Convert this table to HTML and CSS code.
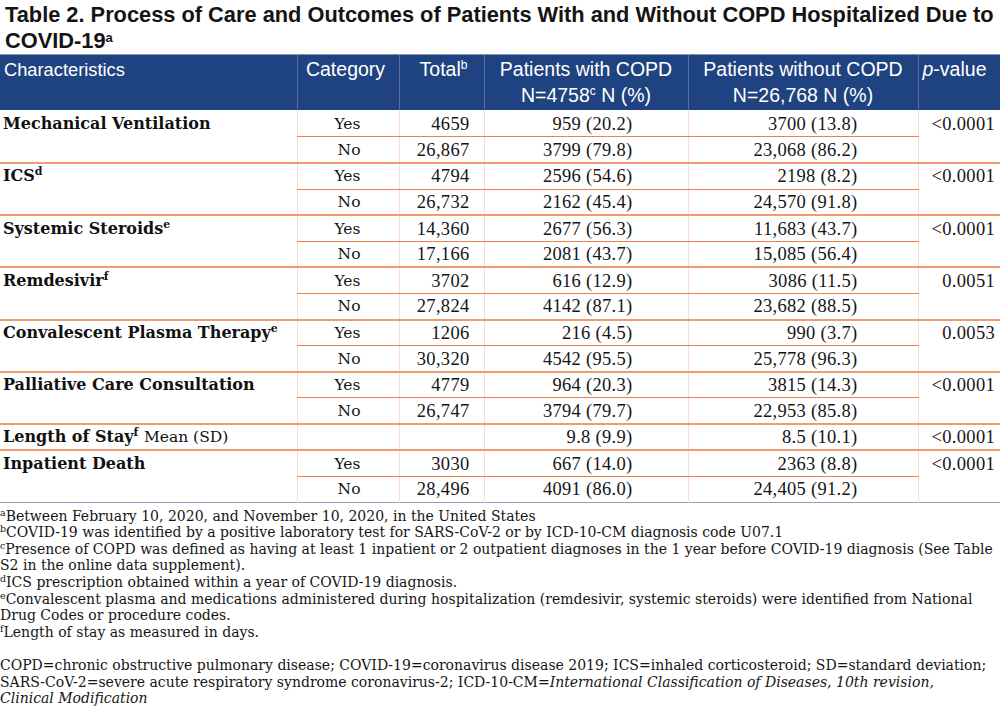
FILE: index.html
```html
<!DOCTYPE html>
<html lang="en">
<head>
<meta charset="utf-8">
<title>Table 2</title>
<link rel="stylesheet" href="styles.css">
</head>
<body>
<h1 class="title">Table 2. Process of Care and Outcomes of Patients With and Without COPD Hospitalized Due to COVID-19<sup>a</sup></h1>
<table class="tbl">
  <colgroup>
    <col class="c1"><col class="c2"><col class="c3"><col class="c4"><col class="c5"><col class="c6">
  </colgroup>
  <thead>
    <tr>
      <th class="h-left">Characteristics</th>
      <th class="h-cat">Category</th>
      <th class="h-tot">Total<sup>b</sup></th>
      <th class="h-mid">Patients with COPD<br>N=4758<sup>c</sup> N (%)</th>
      <th class="h-mid">Patients without COPD<br>N=26,768 N (%)</th>
      <th class="h-p"><i>p</i>-value</th>
    </tr>
  </thead>
  <tbody class="grp first">
    <tr class="top"><td class="lab" rowspan="2">Mechanical Ventilation</td><td class="cat">Yes</td><td class="tot">4659</td><td class="w">959 (20.2)</td><td class="wo">3700 (13.8)</td><td class="pv" rowspan="2">&lt;0.0001</td></tr>
    <tr class="bot"><td class="cat">No</td><td class="tot">26,867</td><td class="w">3799 (79.8)</td><td class="wo">23,068 (86.2)</td></tr>
  </tbody>
  <tbody class="grp">
    <tr class="top"><td class="lab" rowspan="2">ICS<sup>d</sup></td><td class="cat">Yes</td><td class="tot">4794</td><td class="w">2596 (54.6)</td><td class="wo">2198 (8.2)</td><td class="pv" rowspan="2">&lt;0.0001</td></tr>
    <tr class="bot"><td class="cat">No</td><td class="tot">26,732</td><td class="w">2162 (45.4)</td><td class="wo">24,570 (91.8)</td></tr>
  </tbody>
  <tbody class="grp">
    <tr class="top"><td class="lab" rowspan="2">Systemic Steroids<sup>e</sup></td><td class="cat">Yes</td><td class="tot">14,360</td><td class="w">2677 (56.3)</td><td class="wo">11,683 (43.7)</td><td class="pv" rowspan="2">&lt;0.0001</td></tr>
    <tr class="bot"><td class="cat">No</td><td class="tot">17,166</td><td class="w">2081 (43.7)</td><td class="wo">15,085 (56.4)</td></tr>
  </tbody>
  <tbody class="grp">
    <tr class="top"><td class="lab" rowspan="2">Remdesivir<sup>f</sup></td><td class="cat">Yes</td><td class="tot">3702</td><td class="w">616 (12.9)</td><td class="wo">3086 (11.5)</td><td class="pv" rowspan="2">0.0051</td></tr>
    <tr class="bot"><td class="cat">No</td><td class="tot">27,824</td><td class="w">4142 (87.1)</td><td class="wo">23,682 (88.5)</td></tr>
  </tbody>
  <tbody class="grp">
    <tr class="top"><td class="lab" rowspan="2">Convalescent Plasma Therapy<sup>e</sup></td><td class="cat">Yes</td><td class="tot">1206</td><td class="w">216 (4.5)</td><td class="wo">990 (3.7)</td><td class="pv" rowspan="2">0.0053</td></tr>
    <tr class="bot"><td class="cat">No</td><td class="tot">30,320</td><td class="w">4542 (95.5)</td><td class="wo">25,778 (96.3)</td></tr>
  </tbody>
  <tbody class="grp">
    <tr class="top"><td class="lab" rowspan="2">Palliative Care Consultation</td><td class="cat">Yes</td><td class="tot">4779</td><td class="w">964 (20.3)</td><td class="wo">3815 (14.3)</td><td class="pv" rowspan="2">&lt;0.0001</td></tr>
    <tr class="bot"><td class="cat">No</td><td class="tot">26,747</td><td class="w">3794 (79.7)</td><td class="wo">22,953 (85.8)</td></tr>
  </tbody>
  <tbody class="grp">
    <tr class="bot"><td class="lab">Length of Stay<sup>f</sup> <span class="reg">Mean (SD)</span></td><td class="cat"></td><td class="tot"></td><td class="w">9.8 (9.9)</td><td class="wo">8.5 (10.1)</td><td class="pv">&lt;0.0001</td></tr>
  </tbody>
  <tbody class="grp last">
    <tr class="top"><td class="lab" rowspan="2">Inpatient Death</td><td class="cat">Yes</td><td class="tot">3030</td><td class="w">667 (14.0)</td><td class="wo">2363 (8.8)</td><td class="pv" rowspan="2">&lt;0.0001</td></tr>
    <tr class="bot"><td class="cat">No</td><td class="tot">28,496</td><td class="w">4091 (86.0)</td><td class="wo">24,405 (91.2)</td></tr>
  </tbody>
</table>
<div class="notes">
  <p class="fn"><sup>a</sup>Between February 10, 2020, and November 10, 2020, in the United States</p>
  <p class="fn"><sup>b</sup>COVID-19 was identified by a positive laboratory test for SARS-CoV-2 or by ICD-10-CM diagnosis code U07.1</p>
  <p class="fn"><sup>c</sup>Presence of COPD was defined as having at least 1 inpatient or 2 outpatient diagnoses in the 1 year before COVID-19 diagnosis (See Table</p>
  <p class="fn">S2 in the online data supplement).</p>
  <p class="fn"><sup>d</sup>ICS prescription obtained within a year of COVID-19 diagnosis.</p>
  <p class="fn"><sup>e</sup>Convalescent plasma and medications administered during hospitalization (remdesivir, systemic steroids) were identified from National</p>
  <p class="fn">Drug Codes or procedure codes.</p>
  <p class="fn"><sup>f</sup>Length of stay as measured in days.</p>
  <p class="fn gap">COPD=chronic obstructive pulmonary disease; COVID-19=coronavirus disease 2019; ICS=inhaled corticosteroid; SD=standard deviation;</p>
  <p class="fn">SARS-CoV-2=severe acute respiratory syndrome coronavirus-2; ICD-10-CM=<i>International Classification of Diseases, 10th revision,</i></p>
  <p class="fn"><i>Clinical Modification</i></p>
</div>
</body>
</html>
```
FILE: styles.css
```css
html, body {
  margin: 0;
  padding: 0;
  background: #ffffff;
}
body {
  width: 1000px;
  height: 712px;
  overflow: hidden;
  color: #111;
}
.title {
  margin: 0;
  padding: 2px 0 0 5px;
  font-family: "Liberation Sans", Arial, sans-serif;
  font-weight: bold;
  font-size: 21.8px;
  line-height: 26px;
  color: #141414;
}
.title sup {
  display: inline-block;
  font-size: 13px;
  line-height: 11px;
  vertical-align: 6px;
}
.tbl {
  width: 1000px;
  border-collapse: collapse;
  table-layout: fixed;
  border-bottom: 1px solid #8ea0c2;
}
.c1 { width: 297px; }
.c2 { width: 102px; }
.c3 { width: 85px; }
.c4 { width: 204px; }
.c5 { width: 230px; }
.c6 { width: 82px; }

thead th {
  background: #1f4380;
  color: #ffffff;
  font-family: "Liberation Sans", Arial, sans-serif;
  font-weight: normal;
  font-size: 19.5px;
  line-height: 25.5px;
  height: 55px;
  box-sizing: border-box;
  padding: 2px 3px 1px;
  vertical-align: top;
  border-top: 1px solid #7d92bd;
  border-left: 1px solid #5d6f96;
  white-space: nowrap;
}
thead th:first-child { border-left: none; }
thead sup {
  font-size: 12px;
  line-height: 0;
  vertical-align: 7px;
}
.h-left { text-align: left; padding-left: 4px; font-size: 18.3px; }
.h-cat { text-align: center; padding-right: 8px; }
.h-tot { text-align: right; padding-right: 16px; }
.h-mid { text-align: center; }
.h-p { text-align: left; padding-left: 4px; }

tbody td {
  font-family: "Liberation Serif", "Times New Roman", serif;
  font-size: 18.5px;
  letter-spacing: 0.3px;
  line-height: 20px;
  padding: 2.4px 4px 2.2px;
  vertical-align: top;
  text-align: right;
  white-space: nowrap;
  color: #151515;
  border-left: 1px solid #fadcd0;
}
tbody td.lab {
  border-left: none;
  text-align: left;
  padding-left: 3px;
  font-family: "DejaVu Serif", serif;
  font-weight: bold;
  font-size: 16px;
  letter-spacing: 0;
  color: #111;
}
.lab sup {
  font-size: 11px;
  line-height: 0;
  vertical-align: 6px;
}
.lab .reg {
  font-weight: normal;
  font-size: 15.5px;
}
td.cat {
  font-family: "DejaVu Serif", serif;
  font-size: 15.5px;
  letter-spacing: 0;
  padding-right: 38px;
}
td.tot { padding-right: 14px; }
td.w { padding-right: 55px; }
td.wo { padding-right: 60px; }
td.pv { padding-right: 5px; }

tr.top td { border-bottom: 1px solid #ef8048; }
tr.top td[rowspan] { border-bottom: none; }
.grp { border-bottom: 2px solid #f29a70; }
.grp.last { border-bottom: 1px solid #8ea0c2; }
.grp.first tr.top td { padding-top: 4.8px; }

.notes {
  margin-top: 5px;
  font-family: "DejaVu Serif", serif;
  font-size: 14px;
  line-height: 16.6px;
  color: #151515;
}
.fn {
  margin: 0;
  white-space: nowrap;
}
.fn sup {
  font-size: 9.5px;
  line-height: 0;
  vertical-align: 5px;
}
.fn.gap { margin-top: 16.6px; }
```
